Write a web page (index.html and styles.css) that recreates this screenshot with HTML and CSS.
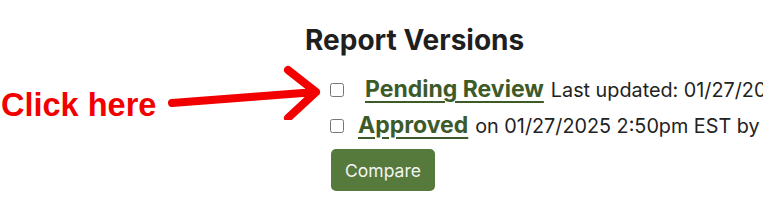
FILE: index.html
```html
<!DOCTYPE html>
<html lang="en">
<head>
  <meta charset="UTF-8">
  <title>Report Versions</title>
  <link rel="stylesheet" href="styles.css">
</head>
<body>
  <div class="page">
    <!-- adnotacja -->
    <div class="callout">
      <span class="callout-text">Click here</span>
      <svg class="callout-arrow" width="160" height="60" viewBox="0 0 160 60">
        <path d="M4 43 L148 32 M120 10 L148 32 L120 58" fill="none" stroke="#f20000" stroke-width="8" stroke-linecap="round" stroke-linejoin="round"/>
      </svg>
    </div>

    <div class="versions">
      <h2>Report Versions</h2>
      <div class="version-row">
        <input type="checkbox" id="v1"><a href="#" class="version-link first">Pending Review</a><span class="version-meta">Last updated: 01/27/2025</span>
      </div>
      <div class="version-row">
        <input type="checkbox" id="v2"><a href="#" class="version-link">Approved</a><span class="version-meta">on 01/27/2025 2:50pm EST by</span>
      </div>
      <button class="compare-btn">Compare</button>
    </div>
  </div>
</body>
</html>
```

FILE: styles.css
```css
body {
  margin: 0;
  padding: 0;
  background-color: #ffffff;
  font-family: Inter, Roboto, sans-serif;
  color: #222222;
  overflow: hidden;
}

.page {
  position: relative;
  width: 763px;
  height: 209px;
  overflow: hidden;
}

.callout {
  position: absolute;
  left: 0;
  top: 60px;
}

.callout-text {
  position: absolute;
  left: 1px;
  top: 27px;
  font-family: "Liberation Sans", Arial, sans-serif;
  font-weight: bold;
  font-size: 32.5px;
  color: #f20000;
  white-space: nowrap;
}

.callout-arrow {
  position: absolute;
  left: 168px;
  top: 0;
}

.versions {
  margin-left: 305px;
  padding-top: 24px;
  white-space: nowrap;
}

h2 {
  margin: 0 0 15px 0;
  font-size: 28px;
  font-weight: 700;
  color: #1f1f1f;
  line-height: 32px;
}

.version-row {
  font-size: 23px;
  line-height: 36px;
  height: 36px;
  margin-left: 25px;
}

.version-row input[type="checkbox"] {
  width: 14px;
  height: 14px;
  margin: 0 14px 1px 0;
  vertical-align: baseline;
}

.version-link {
  font-weight: 700;
  color: #3d5a29;
  text-decoration: underline;
  text-decoration-thickness: 2px;
  text-underline-offset: 4px;
  margin-right: 7px;
}

.version-link.first {
  margin-left: 7px;
}

.version-meta {
  font-size: 19.8px;
  color: #222222;
}

.compare-btn {
  margin: 6px 0 0 26px;
  width: 104px;
  height: 42px;
  background-color: #567a3c;
  color: #f4f4f4;
  font-family: Inter, Roboto, sans-serif;
  font-size: 17.5px;
  border: none;
  border-radius: 5px;
  cursor: pointer;
}
```
